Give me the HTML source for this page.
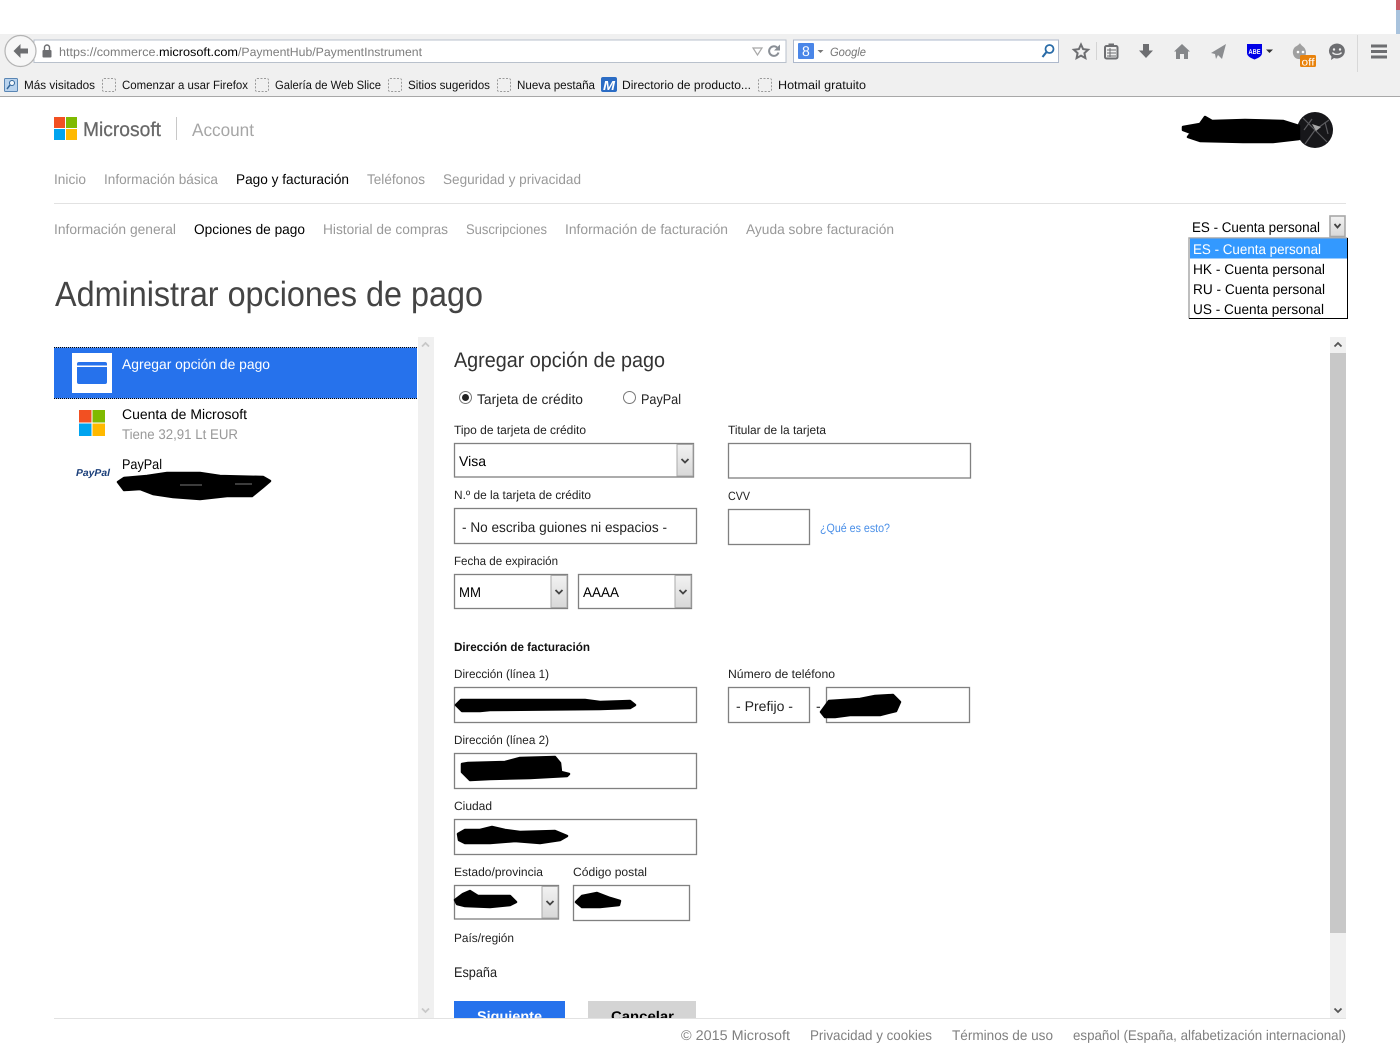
<!DOCTYPE html>
<html lang="es">
<head>
<meta charset="utf-8">
<title>Administrar opciones de pago</title>
<style>
html,body{margin:0;padding:0;background:#fff;width:1400px;height:1050px;overflow:hidden}
svg{display:block}
text{font-family:"Liberation Sans",Arial,sans-serif;text-rendering:geometricPrecision}
.b{font-size:12px;fill:#111}
.n{font-size:14px;fill:#999}
.k{font-size:14px;fill:#000}
.l{font-size:12px;fill:#222}
.f{font-size:14px;fill:#808080}
.box{fill:#fff;stroke:#808080;stroke-width:1.3}
.dot{fill:none;stroke:#9a9a9a;stroke-width:1;stroke-dasharray:2 1.5}
.ic{fill:#6d6e71}
.blob{fill:#000;stroke:#000;stroke-width:2.5;stroke-linejoin:round}
</style>
</head>
<body>
<svg width="1400" height="1050" viewBox="0 0 1400 1050" xmlns="http://www.w3.org/2000/svg">
<defs>
<linearGradient id="btn" x1="0" y1="0" x2="0" y2="1"><stop offset="0" stop-color="#f2f2f2"/><stop offset="1" stop-color="#d8d8d8"/></linearGradient>
<clipPath id="clipBtn"><rect x="440" y="1001" width="280" height="17"/></clipPath>
</defs>
<rect width="1400" height="1050" fill="#fff"/>

<!-- Browser chrome -->
<rect x="1396" y="0" width="4" height="10" fill="#c85a64"/>
<rect x="1396" y="10" width="4" height="24" fill="#a9c3dd"/>
<rect x="0" y="34" width="1400" height="62" fill="#f0f0f0"/>
<rect x="0" y="96" width="1400" height="1" fill="#a8a8a8"/>
<rect x="34" y="40" width="752" height="22.5" fill="#fff" stroke="#b9c1cc"/>
<circle cx="20.5" cy="51" r="15.5" fill="#f7f7f7" stroke="#b4b4b4" stroke-width="1.2"/>
<path d="M13.5 51l7-7v4.5h7.5v5h-7.500v4.500z" fill="#6d6e71"/>
<rect x="42.5" y="50" width="9" height="7.5" rx="1" fill="#6d6e71"/>
<path d="M44.5 50v-2.5a2.5 2.5 0 0 1 5 0V50" fill="none" stroke="#6d6e71" stroke-width="1.4"/>
<text x="59" y="56" class="b" style="fill:#7d7d7d" textLength="100" lengthAdjust="spacingAndGlyphs">https://commerce.</text>
<text x="159" y="56" class="b" style="fill:#000" textLength="79" lengthAdjust="spacingAndGlyphs">microsoft.com</text>
<text x="238" y="56" class="b" style="fill:#7d7d7d" textLength="184" lengthAdjust="spacingAndGlyphs">/PaymentHub/PaymentInstrument</text>
<path d="M753 48h9l-4.500 7z" fill="none" stroke="#a8a8a8" stroke-width="1.2"/>
<path d="M778.500 52.500a4.800 4.800 0 1 1-1.400-5" fill="none" stroke="#8a8f96" stroke-width="2"/>
<path d="M780 44.500v6h-6z" fill="#8a8f96"/>

<rect x="793.500" y="40" width="265" height="22.500" fill="#fff" stroke="#aeb9cc"/>
<rect x="798" y="43" width="16" height="16" rx="1" fill="#4a86e8"/>
<text x="802" y="56" style="font-size:14px;fill:#fff">8</text>
<path d="M817.500 50h6l-3 3z" fill="#777"/>
<text x="830" y="56" class="b" style="fill:#777;font-style:italic" textLength="36" lengthAdjust="spacingAndGlyphs">Google</text>
<circle cx="1049.500" cy="49" r="4" fill="none" stroke="#2a6ca8" stroke-width="1.800"/>
<path d="M1046.500 52l-4 5" stroke="#2a6ca8" stroke-width="2.200" fill="none"/>

<path d="M1081 44.500l2.100 4.600 5 .6-3.700 3.400 1 5-4.400-2.500-4.400 2.500 1-5-3.700-3.400 5-.6z" fill="none" stroke="#6d6e71" stroke-width="2"/>
<rect x="1096" y="42" width="1" height="18" fill="#d4d4d4"/>
<rect x="1105" y="46" width="12.500" height="12.500" rx="1.500" fill="none" stroke="#6d6e71" stroke-width="2"/>
<rect x="1108.500" y="43.500" width="5.500" height="3.500" fill="#6d6e71"/>
<path d="M1107 50h9M1107 53h9M1107 56h9M1110 48v9" stroke="#6d6e71" stroke-width="1"/>
<path d="M1143 44h6v6.500h4l-7 7.500-7-7.500h4z" class="ic"/>
<path d="M1182 44l8 7.500h-2V59h-4v-5h-4v5h-4v-7.500h-2z" fill="#85878a"/>
<path d="M1226 44l-4 15-4-4-2 4-1-5-4-1z" fill="#8b8d90"/>
<path d="M1247 44h15v9c0 3-3.500 5-7.500 6.500-4-1.500-7.500-3.500-7.500-6.500z" fill="#0000e6"/>
<text x="1248.500" y="54" style="font-size:7px;font-weight:bold;fill:#fff" textLength="12" lengthAdjust="spacingAndGlyphs">ABE</text>
<path d="M1266 49.500h7l-3.500 3.500z" fill="#333"/>
<path d="M1300 43c1 2.500 3 3 4.500 5 2 3 2 6.500 0 9-2 2.500-7 3-9.500 .5-2.500-2.500-3-7-.5-10 1.500-1.500 4-2 5.500-4.500z" fill="#a0a0a0"/>
<circle cx="1298" cy="52" r="1.300" fill="#fff"/><circle cx="1303" cy="52" r="1.300" fill="#fff"/>
<rect x="1300" y="55" width="16" height="12" rx="1.500" fill="#e8820c"/>
<text x="1301.500" y="65.500" style="font-size:10.500px;fill:#fff" textLength="13" lengthAdjust="spacingAndGlyphs">off</text>
<path d="M1337 43.500a8 7.500 0 1 1-3 14.500l-3 2 .5-3.500a8 7.500 0 0 1 5.500-13z" class="ic"/>
<circle cx="1334" cy="49.500" r="1.200" fill="#f0f0f0"/><circle cx="1340" cy="49.500" r="1.200" fill="#f0f0f0"/>
<path d="M1332.500 52.500c1.500 2.500 7.500 2.500 9 0" stroke="#f0f0f0" stroke-width="1.300" fill="none"/>
<rect x="1357" y="35" width="1" height="37" fill="#d8d8d8"/>
<path d="M1371 44.500h16v3h-16zM1371 50h16v3h-16zM1371 55.500h16v3h-16z" class="ic"/>

<!-- Bookmarks -->
<rect x="4.500" y="78.500" width="13" height="13" rx="1" fill="#b9d3ee" stroke="#5a86b4"/>
<circle cx="12" cy="83" r="2.500" fill="#f4f8fc" stroke="#33669a"/>
<path d="M10 85l-3 4" stroke="#33669a" stroke-width="1.500"/>
<text x="24" y="89" class="b" textLength="71" lengthAdjust="spacingAndGlyphs">Más visitados</text>
<rect x="102.500" y="78.500" width="13" height="13" rx="1.500" class="dot"/>
<text x="122" y="89" class="b" textLength="126" lengthAdjust="spacingAndGlyphs">Comenzar a usar Firefox</text>
<rect x="255.500" y="78.500" width="13" height="13" rx="1.500" class="dot"/>
<text x="275" y="89" class="b" textLength="106" lengthAdjust="spacingAndGlyphs">Galería de Web Slice</text>
<rect x="388.500" y="78.500" width="13" height="13" rx="1.500" class="dot"/>
<text x="408" y="89" class="b" textLength="82" lengthAdjust="spacingAndGlyphs">Sitios sugeridos</text>
<rect x="497.500" y="78.500" width="13" height="13" rx="1.500" class="dot"/>
<text x="517" y="89" class="b" textLength="78" lengthAdjust="spacingAndGlyphs">Nueva pestaña</text>
<rect x="601" y="77" width="16" height="15" rx="2" fill="#2b6cc4"/>
<text x="603" y="90" style="font-size:13px;font-weight:bold;font-style:italic;fill:#fff" textLength="12" lengthAdjust="spacingAndGlyphs">M</text>
<text x="622" y="89" class="b" textLength="129" lengthAdjust="spacingAndGlyphs">Directorio de producto...</text>
<rect x="758.500" y="78.500" width="13" height="13" rx="1.500" class="dot"/>
<text x="778" y="89" class="b" textLength="88" lengthAdjust="spacingAndGlyphs">Hotmail gratuito</text>

<!-- Header -->
<rect x="54" y="117" width="11" height="11" fill="#f25022"/>
<rect x="66" y="117" width="11" height="11" fill="#7fba00"/>
<rect x="54" y="129" width="11" height="11" fill="#00a4ef"/>
<rect x="66" y="129" width="11" height="11" fill="#ffb900"/>
<text x="83" y="136" style="font-size:20px;fill:#666;stroke:#737373;stroke-width:.3" textLength="78" lengthAdjust="spacingAndGlyphs">Microsoft</text>
<rect x="176" y="117" width="1" height="23" fill="#c8c8c8"/>
<text x="192" y="136" style="font-size:18px;fill:#a6a6a6" textLength="62" lengthAdjust="spacingAndGlyphs">Account</text>

<circle cx="1315" cy="130" r="18" fill="#17171a"/>
<path d="M1303 118l12 12 14-10M1315 130l-10 14M1315 130l12 12M1304 130l8-11M1325 122l3 12" stroke="#5a5a5e" stroke-width="1.200" fill="none"/>
<path d="M1312 124l9 3-5 4z" fill="#a8a8a8"/>
<path class="blob" d="M1183 127L1200 124 1205 117 1212 121 1245 120 1283 121 1299 126 1299 139 1273 142 1243 142 1200 141 1188 137 1191 133 1183 130z"/>

<!-- Nav -->
<text x="54" y="184" class="n" textLength="32" lengthAdjust="spacingAndGlyphs">Inicio</text>
<text x="104" y="184" class="n" textLength="114" lengthAdjust="spacingAndGlyphs">Información básica</text>
<text x="236" y="184" class="k" textLength="113" lengthAdjust="spacingAndGlyphs">Pago y facturación</text>
<text x="367" y="184" class="n" textLength="58" lengthAdjust="spacingAndGlyphs">Teléfonos</text>
<text x="443" y="184" class="n" textLength="138" lengthAdjust="spacingAndGlyphs">Seguridad y privacidad</text>
<rect x="54" y="203" width="1292" height="1" fill="#e2e2e2"/>
<text x="54" y="234" class="n" textLength="122" lengthAdjust="spacingAndGlyphs">Información general</text>
<text x="194" y="234" class="k" textLength="111" lengthAdjust="spacingAndGlyphs">Opciones de pago</text>
<text x="323" y="234" class="n" textLength="125" lengthAdjust="spacingAndGlyphs">Historial de compras</text>
<text x="466" y="234" class="n" textLength="81" lengthAdjust="spacingAndGlyphs">Suscripciones</text>
<text x="565" y="234" class="n" textLength="163" lengthAdjust="spacingAndGlyphs">Información de facturación</text>
<text x="746" y="234" class="n" textLength="148" lengthAdjust="spacingAndGlyphs">Ayuda sobre facturación</text>

<!-- Account select -->
<text x="1192" y="232" class="k" textLength="128" lengthAdjust="spacingAndGlyphs">ES - Cuenta personal</text>
<rect x="1330" y="216" width="15" height="20.500" fill="url(#btn)" stroke="#a8a8a8" stroke-width="1.600"/>
<path d="M1334.500 224l3 3.500 3-3.500" fill="none" stroke="#444" stroke-width="1.800"/>
<rect x="1189" y="238" width="158.500" height="80.500" fill="#fff"/>
<path d="M1189 318.500V238h158.500" fill="none" stroke="#a8a8a8" stroke-width="1.500"/>
<path d="M1347.500 238v80.500H1189" fill="none" stroke="#000" stroke-width="1"/>
<rect x="1190" y="238.500" width="157" height="20" fill="#3399ff"/>
<text x="1193" y="254" class="k" style="fill:#fff" textLength="128" lengthAdjust="spacingAndGlyphs">ES - Cuenta personal</text>
<text x="1193" y="274" class="k" textLength="132" lengthAdjust="spacingAndGlyphs">HK - Cuenta personal</text>
<text x="1193" y="294" class="k" textLength="132" lengthAdjust="spacingAndGlyphs">RU - Cuenta personal</text>
<text x="1193" y="314" class="k" textLength="131" lengthAdjust="spacingAndGlyphs">US - Cuenta personal</text>

<!-- Title -->
<text x="55" y="306" style="font-size:35px;fill:#444" textLength="428" lengthAdjust="spacingAndGlyphs">Administrar opciones de pago</text>

<!-- Left list -->
<rect x="54" y="347.500" width="363" height="51" fill="#2672ec"/>
<path d="M54 347.500h363M54 398.500h363" stroke="#000" stroke-width="1" stroke-dasharray="1 1"/>
<rect x="72" y="353" width="40" height="40" fill="#fff"/>
<rect x="77" y="362" width="30" height="22" rx="2" fill="#2672ec"/>
<rect x="77" y="365.500" width="30" height="1.500" fill="#fff"/>
<text x="122" y="369" class="k" style="fill:#fff" textLength="148" lengthAdjust="spacingAndGlyphs">Agregar opción de pago</text>
<rect x="79" y="410" width="12.500" height="12.500" fill="#f25022"/>
<rect x="92.500" y="410" width="12.500" height="12.500" fill="#7fba00"/>
<rect x="79" y="423.500" width="12.500" height="12.500" fill="#00a4ef"/>
<rect x="92.500" y="423.500" width="12.500" height="12.500" fill="#ffb900"/>
<text x="122" y="419" class="k" textLength="125" lengthAdjust="spacingAndGlyphs">Cuenta de Microsoft</text>
<text x="122" y="439" class="n" textLength="116" lengthAdjust="spacingAndGlyphs">Tiene 32,91 Lt EUR</text>
<text x="76" y="476" style="font-size:10px;font-weight:bold;font-style:italic;fill:#1b3f7a" textLength="34" lengthAdjust="spacingAndGlyphs">PayPal</text>
<text x="122" y="469" class="k" textLength="40" lengthAdjust="spacingAndGlyphs">PayPal</text>
<path class="blob" d="M118 482L124 478 147 476 167 473 200 473 220 476 263 477 270 481 263 487 252 496 227 496 200 499 173 497 153 494 140 489 124 490z"/>
<path d="M180 485h22M235 484h17" stroke="#777" stroke-width="1"/>

<!-- Left scrollbar -->
<rect x="418" y="337" width="16" height="681" fill="#f0f0f0"/>
<path d="M422 346.500l3.500-3.500 3.500 3.500" fill="none" stroke="#c8c8c8" stroke-width="1.800"/>
<path d="M422 1008.500l3.500 3.500 3.500-3.500" fill="none" stroke="#c8c8c8" stroke-width="1.800"/>

<!-- Form -->
<text x="454" y="367" style="font-size:21px;fill:#333" textLength="211" lengthAdjust="spacingAndGlyphs">Agregar opción de pago</text>
<circle cx="465.500" cy="397.500" r="6" fill="#fff" stroke="#777"/>
<circle cx="465.500" cy="397.500" r="3.500" fill="#222"/>
<text x="477" y="404" class="k" style="fill:#222" textLength="106" lengthAdjust="spacingAndGlyphs">Tarjeta de crédito</text>
<circle cx="629.500" cy="397.500" r="6" fill="#fff" stroke="#777"/>
<text x="641" y="404" class="k" style="fill:#222" textLength="40" lengthAdjust="spacingAndGlyphs">PayPal</text>

<text x="454" y="434" class="l" textLength="132" lengthAdjust="spacingAndGlyphs">Tipo de tarjeta de crédito</text>
<text x="728" y="434" class="l" textLength="98" lengthAdjust="spacingAndGlyphs">Titular de la tarjeta</text>
<rect x="454.500" y="443.500" width="239" height="33.500" class="box"/>
<rect x="677" y="444.500" width="16" height="31.500" fill="url(#btn)" stroke="#aaa"/>
<path d="M681.500 459l3.500 3.500 3.500-3.500" fill="none" stroke="#444" stroke-width="1.800"/>
<text x="459" y="466" class="k" textLength="27" lengthAdjust="spacingAndGlyphs">Visa</text>
<rect x="728.500" y="443.500" width="242" height="34.500" class="box"/>

<text x="454" y="499" class="l" textLength="137" lengthAdjust="spacingAndGlyphs">N.º de la tarjeta de crédito</text>
<text x="728" y="500" class="l" textLength="22" lengthAdjust="spacingAndGlyphs">CVV</text>
<rect x="454.500" y="508.500" width="242" height="35" class="box"/>
<text x="462" y="532" class="k" style="fill:#222" textLength="205" lengthAdjust="spacingAndGlyphs">- No escriba guiones ni espacios -</text>
<rect x="728.500" y="509.500" width="81" height="35" class="box"/>
<text x="820" y="532" class="l" style="fill:#4a8fe8" textLength="70" lengthAdjust="spacingAndGlyphs">¿Qué es esto?</text>

<text x="454" y="565" class="l" textLength="104" lengthAdjust="spacingAndGlyphs">Fecha de expiración</text>
<rect x="454.500" y="574.500" width="113" height="34" class="box"/>
<rect x="551" y="575.500" width="16" height="32" fill="url(#btn)" stroke="#aaa"/>
<path d="M555.500 590l3.500 3.500 3.500-3.500" fill="none" stroke="#444" stroke-width="1.800"/>
<text x="459" y="597" class="k" textLength="22" lengthAdjust="spacingAndGlyphs">MM</text>
<rect x="578.500" y="574.500" width="113" height="34" class="box"/>
<rect x="675" y="575.500" width="16" height="32" fill="url(#btn)" stroke="#aaa"/>
<path d="M679.500 590l3.500 3.500 3.500-3.500" fill="none" stroke="#444" stroke-width="1.800"/>
<text x="583" y="597" class="k" textLength="36" lengthAdjust="spacingAndGlyphs">AAAA</text>

<text x="454" y="651" class="l" style="font-weight:bold;fill:#111" textLength="136" lengthAdjust="spacingAndGlyphs">Dirección de facturación</text>

<text x="454" y="678" class="l" textLength="95" lengthAdjust="spacingAndGlyphs">Dirección (línea 1)</text>
<text x="728" y="678" class="l" textLength="107" lengthAdjust="spacingAndGlyphs">Número de teléfono</text>
<rect x="454.500" y="687.500" width="242" height="35" class="box"/>
<path class="blob" d="M456 705L461 700 585 700 600 702 630 701 635 705 630 708 600 709 490 710 480 711 462 711z"/>
<rect x="728.500" y="687.500" width="81" height="35" class="box"/>
<text x="736" y="711" class="k" style="fill:#222" textLength="57" lengthAdjust="spacingAndGlyphs">- Prefijo -</text>
<text x="816" y="711" class="k" style="fill:#222">-</text>
<rect x="826.500" y="687.500" width="143" height="35" class="box"/>
<path class="blob" d="M821 712L829 701 860 699 875 696 893 695 900 702 896 711 880 715 850 715 835 717 825 717z"/>

<text x="454" y="744" class="l" textLength="95" lengthAdjust="spacingAndGlyphs">Dirección (línea 2)</text>
<rect x="454.500" y="753.500" width="242" height="35" class="box"/>
<path class="blob" d="M462 764L468 763 505 762 520 758 555 757 560 763 561 772 569 774 567 776 530 778 490 779 470 780 462 772z"/>

<text x="454" y="810" class="l" textLength="38" lengthAdjust="spacingAndGlyphs">Ciudad</text>
<rect x="454.500" y="819.500" width="242" height="35" class="box"/>
<path class="blob" d="M458 834L465 830 480 830 492 827 505 830 520 832 555 831 567 836 560 840 540 843 515 841 490 843 465 843 459 840z"/>

<text x="454" y="876" class="l" textLength="89" lengthAdjust="spacingAndGlyphs">Estado/provincia</text>
<text x="573" y="876" class="l" textLength="74" lengthAdjust="spacingAndGlyphs">Código postal</text>
<rect x="454.500" y="885.500" width="104" height="33.500" class="box"/>
<rect x="542" y="886.500" width="16" height="31.500" fill="url(#btn)" stroke="#aaa"/>
<path d="M546.500 901l3.500 3.500 3.500-3.500" fill="none" stroke="#444" stroke-width="1.800"/>
<path class="blob" d="M455 900L463 894 470 891 478 896 510 896 516 902 510 905 490 907 465 906 457 904z"/>
<rect x="573.500" y="885.500" width="116" height="35" class="box"/>
<path class="blob" d="M576 902L582 896 597 893 610 898 620 901 619 905 600 907 582 907z"/>

<text x="454" y="942" class="l" textLength="60" lengthAdjust="spacingAndGlyphs">País/región</text>
<text x="454" y="977" class="k" style="fill:#222" textLength="43" lengthAdjust="spacingAndGlyphs">España</text>

<g clip-path="url(#clipBtn)">
<rect x="454" y="1001" width="111" height="24" fill="#2672ec"/>
<text x="477" y="1021" style="font-size:14px;font-weight:bold;fill:#fff" textLength="65" lengthAdjust="spacingAndGlyphs">Siguiente</text>
<rect x="588" y="1001" width="108" height="24" fill="#d4d4d4"/>
<text x="611" y="1021" style="font-size:14px;font-weight:bold;fill:#000" textLength="63" lengthAdjust="spacingAndGlyphs">Cancelar</text>
</g>

<!-- Right scrollbar -->
<rect x="1330" y="337" width="16" height="681" fill="#f0f0f0"/>
<rect x="1330" y="353" width="16" height="580" fill="#c8c8c8"/>
<path d="M1334.500 346.500l3.500-3.500 3.500 3.500" fill="none" stroke="#555" stroke-width="1.800"/>
<path d="M1334.500 1008.500l3.500 3.500 3.500-3.500" fill="none" stroke="#555" stroke-width="1.800"/>

<!-- Footer -->
<rect x="54" y="1018" width="1292" height="1" fill="#e2e2e2"/>
<text x="681" y="1040" class="f" textLength="109" lengthAdjust="spacingAndGlyphs">© 2015 Microsoft</text>
<text x="810" y="1040" class="f" textLength="122" lengthAdjust="spacingAndGlyphs">Privacidad y cookies</text>
<text x="952" y="1040" class="f" textLength="101" lengthAdjust="spacingAndGlyphs">Términos de uso</text>
<text x="1073" y="1040" class="f" textLength="273" lengthAdjust="spacingAndGlyphs">español (España, alfabetización internacional)</text>
</svg>
</body>
</html>
